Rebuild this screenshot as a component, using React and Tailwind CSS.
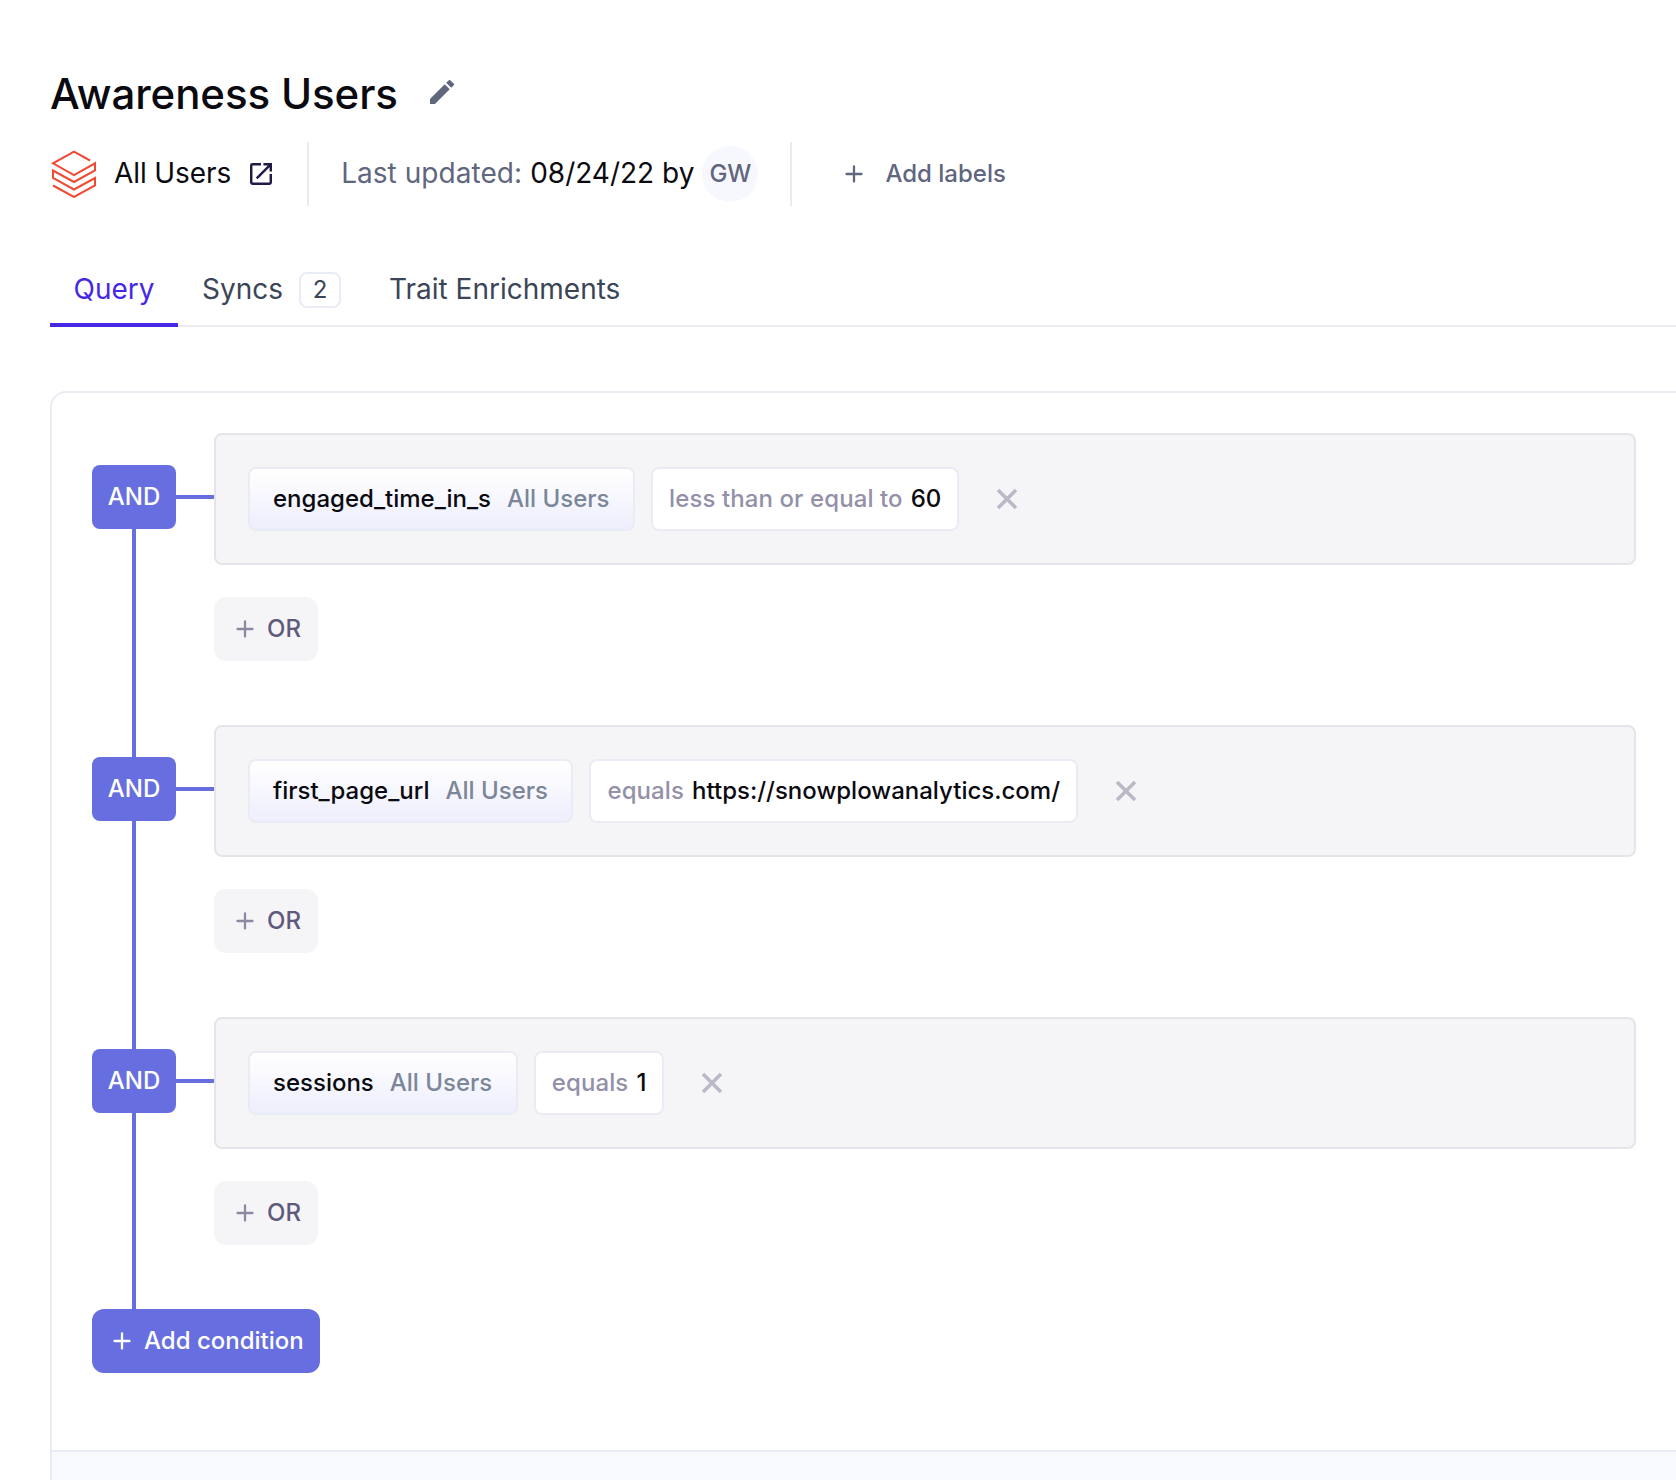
import React from "react";

const groups = [
  { name: "engaged_time_in_s", op: "less than or equal to", value: "60" },
  { name: "first_page_url", op: "equals", value: "https://snowplowanalytics.com/" },
  { name: "sessions", op: "equals", value: "1" },
];

function Plus({ className }) {
  return (
    <svg viewBox="0 0 24 24" className={"w-6 h-6 shrink-0 " + className} fill="none" stroke="currentColor" strokeWidth="2.3" strokeLinecap="round">
      <path d="M12 4.5v15M4.5 12h15" />
    </svg>
  );
}

function Group({ name, op, value }) {
  return (
    <div className="flex h-[292px]">
      <div className="flex w-[84px] flex-col items-center">
        <div className="h-8 w-1 shrink-0" />
        <div className="flex h-16 w-[84px] shrink-0 items-center justify-center rounded-lg bg-[#676fe0] font-medium text-white">
          AND
        </div>
        <div className="-mb-8 w-1 shrink-0 grow bg-[#676fe0]" />
      </div>
      <div className="mt-[62px] h-1 w-[38px] shrink-0 bg-[#676fe0]" />
      <div className="flex grow flex-col items-start gap-8">
        <div className="flex h-[132px] w-full items-center rounded-lg border-2 border-[#e4e4ea] bg-[#f5f5f8] pl-8">
          <div className="flex h-16 items-center gap-4 whitespace-nowrap rounded-lg border-2 border-[#e9ecf5] bg-gradient-to-b from-white to-[#eeeefd] pl-[23px] pr-[23.5px] font-medium">
            <span className="text-[#0a0a10]">{name}</span>
            <span className="text-[#7b8798]">All Users</span>
          </div>
          <div className="ml-4 flex h-16 items-center gap-2 whitespace-nowrap rounded-lg border-2 border-[#e9ecf5] bg-white px-4 font-medium">
            <span className="tracking-[0.1px] text-[#9390a8]">{op}</span>
            <span className="text-[#0a0a10]">{value}</span>
          </div>
          <svg viewBox="0 0 24 24" className="ml-9 h-6 w-6 shrink-0 text-[#bbb9c8]" fill="none" stroke="currentColor" strokeWidth="3.6">
            <path d="M3 3l18 18M21 3L3 21" />
          </svg>
        </div>
        <button className="flex h-16 w-[104px] items-center rounded-xl bg-[#f5f5f8] pl-[19px] font-medium text-[#5f5a7c]">
          <Plus className="text-[#8d89a3]" />
          <span className="ml-[10px]">OR</span>
        </button>
      </div>
    </div>
  );
}

export default function App() {
  return (
    <div className="flex h-[1480px] w-full flex-col overflow-hidden bg-white pl-[50px] font-['Inter',sans-serif] text-[24px] leading-8 text-[#0a0a10]">
      <header className="mt-[70px] flex h-12 items-center">
        <h1 className="whitespace-nowrap text-[42px] font-medium leading-[48px] tracking-[-0.1px]">Awareness Users</h1>
        <svg viewBox="3 3 18 18" className="mb-1 ml-8 h-6 w-6 text-[#60667e]" fill="currentColor">
          <path d="M3 17.25V21h3.75L17.81 9.94l-3.75-3.75L3 17.25zM20.71 7.04a1 1 0 0 0 0-1.41l-2.34-2.34a1 1 0 0 0-1.41 0l-1.83 1.83 3.75 3.75 1.83-1.83z" />
        </svg>
      </header>

      <div className="mt-6 flex h-16 items-center whitespace-nowrap text-[28px]">
        <svg viewBox="0 0 48 48" className="h-12 w-12 shrink-0" fill="none" stroke="#ee4b32" strokeWidth="2">
          <path d="M40 10.500L24 1.700L3 13.300L24 25L45 13.300V20.500L24 32L3 20.500V28L24 39.500L45 28V35.500L24 47L3 35.500" />
        </svg>
        <span className="mb-0.5 ml-4 tracking-[-0.1px]">All Users</span>
        <svg viewBox="3 3 18 18" className="ml-[19px] h-[22px] w-[22px] text-[#221a45]" fill="currentColor">
          <path d="M19 19H5V5h7V3H5a2 2 0 0 0-2 2v14a2 2 0 0 0 2 2h14a2 2 0 0 0 2-2v-7h-2v7zM14 3v2h3.590l-9.830 9.830 1.410 1.410L19 6.410V10h2V3h-7z" />
        </svg>
        <div className="ml-[35px] h-16 w-[2px] bg-[#e8ebf2]" />
        <span className="mb-0.5 ml-8 tracking-[0.05px] text-[#60667e]">Last updated:</span>
        <span className="mb-0.5 ml-2">08/24/22 by</span>
        <div className="ml-2 flex h-14 w-14 items-center justify-center rounded-full bg-[#f7f8fd] text-[24px] font-medium text-[#60667e]">GW</div>
        <div className="ml-8 h-16 w-[2px] bg-[#e8ebf2]" />
        <Plus className="ml-[50px] text-[#60667e]" />
        <span className="ml-[19px] text-[24px] font-medium text-[#60667e]">Add labels</span>
      </div>

      <nav className="mt-[48px] flex h-[73px] shrink-0 border-b-2 border-[#e9ebf5] text-[28px] text-[#3b4558]">
        <div className="h-[73px] w-32 border-b-4 border-[#4628e4] pt-[19px] text-center text-[#4628e4]">Query</div>
        <div className="flex h-[73px] items-start gap-4 px-6 pt-[19px]">
          Syncs
          <span className="-mt-px flex h-9 w-[42px] items-center justify-center rounded-lg border-2 border-[#e9ecf5] text-[24px]">2</span>
        </div>
        <div className="px-6 pt-[19px]">Trait Enrichments</div>
      </nav>

      <main className="mt-16 grow rounded-tl-2xl border-l-2 border-t-2 border-[#e9ecf3]">
        <div className="h-[1057px] pl-10 pr-10 pt-10">
          {groups.map((g) => (
            <Group key={g.name} {...g} />
          ))}
          <button className="relative flex h-16 w-[228px] items-center rounded-xl bg-[#676fe0] pl-[18px] font-medium text-white">
            <Plus className="" />
            <span className="ml-[10px] whitespace-nowrap">Add condition</span>
          </button>
        </div>
        <div className="h-10 border-t-2 border-[#e9ecf5] bg-[#f7f9fd]" />
      </main>
    </div>
  );
}
